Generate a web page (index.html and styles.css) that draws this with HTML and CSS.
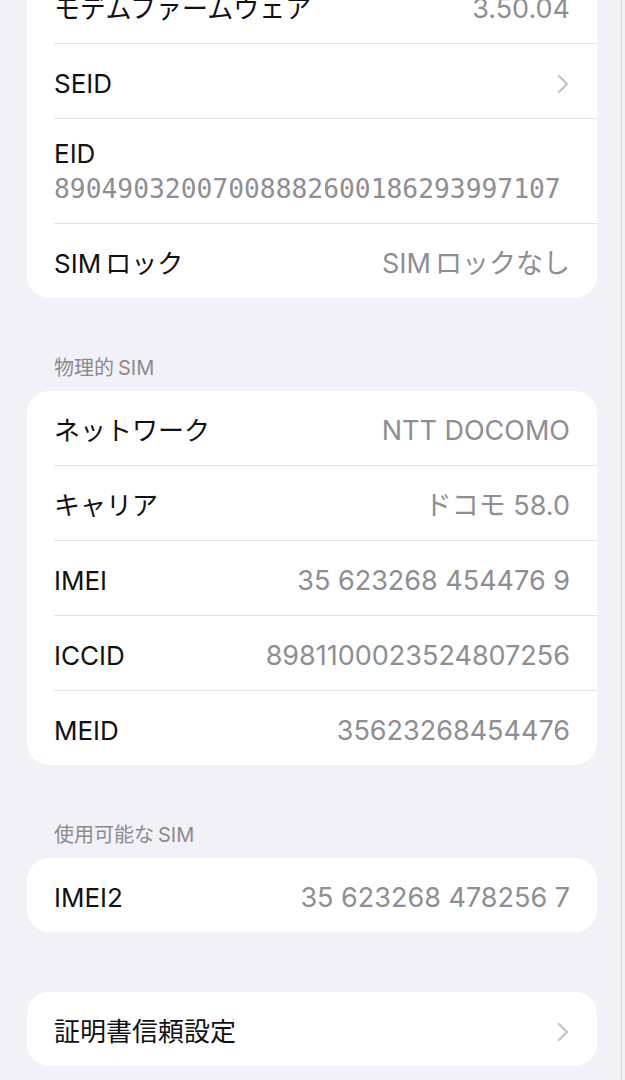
FILE: index.html
```html
<!DOCTYPE html>
<html lang="ja">
<head>
<meta charset="utf-8">
<title>情報</title>
<link rel="stylesheet" href="styles.css">
</head>
<body>
<div class="page">
  <div class="card first">
    <div class="row"><span class="label">モデムファームウェア</span><span class="value">3.50.04</span></div>
    <div class="row"><span class="label">SEID</span><svg class="chevron" width="12" height="20" viewBox="0 0 12 20"><path d="M2 2 L10 10 L2 18" fill="none" stroke="#c5c5c9" stroke-width="2.4" stroke-linecap="round" stroke-linejoin="round"/></svg></div>
    <div class="row tall"><span class="label">EID</span><span class="mono">89049032007008882600186293997107</span></div>
    <div class="row"><span class="label">SIM<span class="gap">ロック</span></span><span class="value">SIM<span class="gap">ロックなし</span></span></div>
  </div>

  <div class="header">物理的<span class="gap-sm">SIM</span></div>
  <div class="card">
    <div class="row"><span class="label">ネットワーク</span><span class="value">NTT DOCOMO</span></div>
    <div class="row"><span class="label">キャリア</span><span class="value">ドコモ 58.0</span></div>
    <div class="row"><span class="label">IMEI</span><span class="value">35 623268 454476 9</span></div>
    <div class="row"><span class="label">ICCID</span><span class="value">8981100023524807256</span></div>
    <div class="row"><span class="label">MEID</span><span class="value">35623268454476</span></div>
  </div>

  <div class="header">使用可能な<span class="gap-sm">SIM</span></div>
  <div class="card">
    <div class="row"><span class="label">IMEI2</span><span class="value">35 623268 478256 7</span></div>
  </div>

  <div class="card spaced">
    <div class="row"><span class="label">証明書信頼設定</span><svg class="chevron" width="12" height="20" viewBox="0 0 12 20"><path d="M2 2 L10 10 L2 18" fill="none" stroke="#c5c5c9" stroke-width="2.4" stroke-linecap="round" stroke-linejoin="round"/></svg></div>
  </div>
</div>
</body>
</html>
```

FILE: styles.css
```css
html, body {
  margin: 0;
  padding: 0;
  background: #f2f2f7;
}
body {
  font-family: Inter, "Noto Sans CJK JP", sans-serif;
  overflow: hidden;
  height: 1080px;
}
.page {
  width: 622px;
  height: 1080px;
  border-right: 1px solid #d6d6dc;
  background: #f2f1f7;
  box-sizing: border-box;
  padding: 0 0 0 27px;
  overflow: hidden;
}
.card {
  width: 570px;
  background: #ffffff;
  border-radius: 22px;
  overflow: hidden;
}
.card.first {
  margin-top: -31px;
  border-radius: 0 0 22px 22px;
}
.card.spaced {
  margin-top: 60px;
}
.row {
  margin-left: 27px;
  padding-right: 27px;
  padding-top: 5px;
  box-sizing: border-box;
  height: 75px;
  border-bottom: 1px solid #e2e2e7;
  display: flex;
  align-items: center;
  justify-content: space-between;
}
.row:last-child {
  border-bottom: none;
  height: 74px;
}
.row.tall {
  height: 105px;
  flex-direction: column;
  align-items: flex-start;
  justify-content: flex-start;
  padding-top: 18px;
}
.label {
  font-size: 26px;
  color: #111113;
  line-height: 34px;
}
.value {
  font-size: 27px;
  color: #8e8e93;
  line-height: 34px;
}
.gap {
  margin-left: 4px;
}
.gap-sm {
  margin-left: 4px;
}
.mono {
  font-family: "DejaVu Sans Mono", monospace;
  font-size: 26.3px;
  color: #8e8e93;
  line-height: 36px;
}
.chevron {
  display: block;
  margin-right: 1px;
}
.header {
  font-size: 20px;
  color: #8a8a8e;
  line-height: 24px;
  padding: 58px 0 11px 27px;
}
```
